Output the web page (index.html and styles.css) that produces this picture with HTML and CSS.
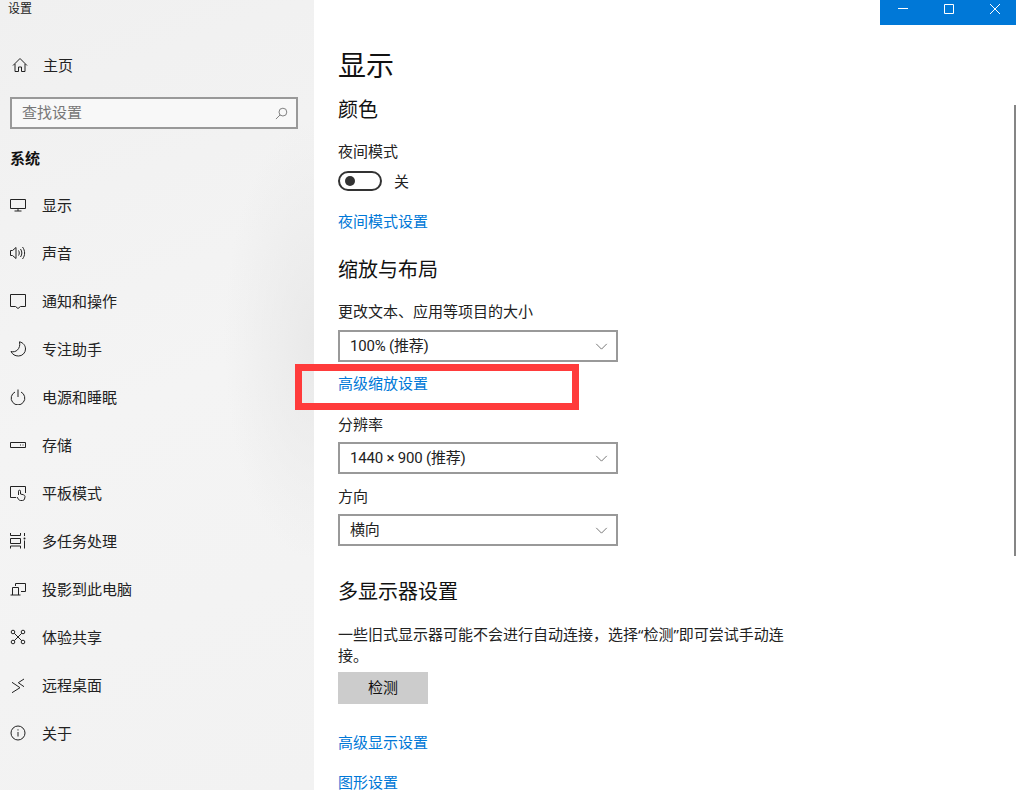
FILE: index.html
```html
<!DOCTYPE html>
<html lang="zh-CN">
<head>
<meta charset="utf-8">
<title>设置</title>
<link rel="stylesheet" href="styles.css">
</head>
<body>
<div class="window">
  <aside class="sidebar">
    <div class="app-title">设置</div>
    <a class="nav-item home">
      <svg class="icon" viewBox="0 0 16 16"><path d="M1 8.500 8 1.500l7 7M3 7v7.500h3.500V10h3v4.500H13V7"/></svg>
      <span>主页</span>
    </a>
    <div class="search">
      <span class="search-text">查找设置</span>
      <svg class="search-icon" viewBox="0 0 14 14"><circle cx="8.500" cy="5.500" r="4.200"/><path d="M5.500 8.500 1 13"/></svg>
    </div>
    <div class="group">系统</div>
    <nav class="nav">
      <a class="nav-item"><svg class="icon" viewBox="0 0 16 16"><path d="M.5 2.500h15v9H.5zM8 11.500v2.500M4.500 14h7"/></svg><span>显示</span></a>
      <a class="nav-item"><svg class="icon" viewBox="0 0 16 16"><path d="M.5 5.500h2L6 2.500v11l-3.500-3h-2zM8.500 5.500c1 1.500 1 3.500 0 5M10.500 4c1.800 2.500 1.800 5.500 0 8M12.500 2c2.800 3.500 2.800 8.500 0 12"/></svg><span>声音</span></a>
      <a class="nav-item"><svg class="icon" viewBox="0 0 16 16"><path d="M.5 1.500h15v12h-5L8 15.500 5.500 13.500h-5z"/></svg><span>通知和操作</span></a>
      <a class="nav-item"><svg class="icon" viewBox="0 0 16 16"><path d="M9.500.8c4 1 6 4 6 7.200a7 7 0 0 1-7 7c-3.500 0-6-1.500-7.500-4.500 4.500 1.500 10-2.500 8.500-9.700z"/></svg><span>专注助手</span></a>
      <a class="nav-item"><svg class="icon" viewBox="0 0 16 16"><path d="M5 3a6.800 6.800 0 1 0 6 0M8 .5V8"/></svg><span>电源和睡眠</span></a>
      <a class="nav-item"><svg class="icon" viewBox="0 0 16 16"><path d="M.5 5.500h15v5H.5zM10 8h1M12.500 8h1"/></svg><span>存储</span></a>
      <a class="nav-item"><svg class="icon" viewBox="0 0 16 16"><path d="M6 12.500H.5V1.500h15V8M8.500 10V6.200a1 1 0 0 1 2 0V9l3 .8c1.200.4 1.500 1 1.500 2l-.5 2.200c-.3 1-1 1.500-2 1.500h-2c-1 0-1.500-.5-2-1.200L7 12"/></svg><span>平板模式</span></a>
      <a class="nav-item"><svg class="icon" viewBox="0 0 16 16"><path d="M.5 0v2.500h10V0M.5 15.500V13h10v2.500M.5 5.500h10v5H.5zM14.500 0v3M14.500 7.500v8"/><circle class="dot" cx="14.500" cy="5.500" r="1"/></svg><span>多任务处理</span></a>
      <a class="nav-item"><svg class="icon" viewBox="0 0 16 16"><path d="M5.500 5V2.500h10v8H11M.5 14h10M2.500 14V6.500h6V14"/></svg><span>投影到此电脑</span></a>
      <a class="nav-item"><svg class="icon" viewBox="0 0 16 16"><circle cx="3" cy="3" r="1.800"/><circle cx="13" cy="3" r="1.800"/><circle cx="3" cy="13" r="1.800"/><circle cx="13" cy="13" r="1.800"/><path d="m4.300 4.300 7.400 7.400M11.700 4.300l-7.400 7.400"/></svg><span>体验共享</span></a>
      <a class="nav-item"><svg class="icon" viewBox="0 0 16 16"><path d="m2 5.300 8 5.400-8 5M14 2 8.300 5.700 14 9.700"/></svg><span>远程桌面</span></a>
      <a class="nav-item"><svg class="icon" viewBox="0 0 16 16"><circle cx="8" cy="8" r="7"/><path d="M8 7v4.500M8 4.300v1.200"/></svg><span>关于</span></a>
    </nav>
  </aside>
  <main class="content">
    <h1 class="title">显示</h1>
    <h2 class="heading first">颜色</h2>
    <div class="label gap-18">夜间模式</div>
    <div class="toggle-row">
      <span class="toggle"><span class="knob"></span></span>
      <span>关</span>
    </div>
    <a class="link gap-21">夜间模式设置</a>
    <h2 class="heading gap-24">缩放与布局</h2>
    <div class="label gap-18">更改文本、应用等项目的大小</div>
    <div class="select gap-8"><span class="select-text">100% (推荐)</span><svg class="chevron" viewBox="0 0 14 8"><path d="m1 1 6 6 6-6"/></svg></div>
    <a class="link gap-12">高级缩放设置</a>
    <div class="label gap-21">分辨率</div>
    <div class="select gap-7"><span class="select-text">1440 × 900 (推荐)</span><svg class="chevron" viewBox="0 0 14 8"><path d="m1 1 6 6 6-6"/></svg></div>
    <div class="label gap-13">方向</div>
    <div class="select gap-7"><span class="select-text">横向</span><svg class="chevron" viewBox="0 0 14 8"><path d="m1 1 6 6 6-6"/></svg></div>
    <h2 class="heading gap-32">多显示器设置</h2>
    <p class="para">一些旧式显示器可能不会进行自动连接，选择“检测”即可尝试手动连接。</p>
    <div class="button">检测</div>
    <a class="link gap-29">高级显示设置</a>
    <a class="link gap-20">图形设置</a>
    <div class="scrollbar"></div>
  </main>
  <div class="caption">
    <span class="cap-btn"><svg viewBox="0 0 10 10"><path d="M0 4.500h10"/></svg></span>
    <span class="cap-btn"><svg viewBox="0 0 10 10"><path d="M.5.500h9v9h-9z"/></svg></span>
    <span class="cap-btn"><svg viewBox="0 0 10 10"><path d="m0 0 10 10M10 0 0 10"/></svg></span>
  </div>
  <div class="highlight"></div>
</div>
</body>
</html>
```
FILE: styles.css
```css
* { box-sizing: border-box; }
html, body { margin: 0; height: 100%; overflow: hidden; background: #fff; }
body {
  font-family: "Noto Sans", "Noto Sans CJK SC", sans-serif;
  font-size: 15px;
  color: #111;
}
.window { position: relative; display: flex; width: 1016px; height: 790px; overflow: hidden; }

.sidebar {
  width: 314px;
  flex: none;
  padding: 0 0 0 10px;
  background:
    radial-gradient(ellipse 90px 220px at 100% 340px, #e9e9e9 0%, rgba(233,233,233,0) 100%),
    linear-gradient(160deg, #f0f0f0 0%, #f4f4f4 50%, #f2f2f2 100%);
}
.app-title { margin-left: -2px; height: 18px; font-size: 12px; line-height: 18px; color: #222; }
.nav-item { display: flex; align-items: center; gap: 16px; height: 48px; line-height: 20px; color: #222; }
.nav-item span { display: block; }
.home { margin-top: 23px; padding-left: 2px; gap: 15px; }
.icon { width: 16px; height: 16px; flex: none; fill: none; stroke: #222; stroke-width: 1; }
.icon .dot { fill: #222; stroke: none; }
.search {
  display: flex;
  align-items: center;
  justify-content: space-between;
  width: 288px;
  height: 32px;
  margin-top: 8px;
  padding: 0 8px 0 10px;
  border: 2px solid #999;
  background: #f8f8f8;
  color: #777;
}
.search-text { display: block; height: 20px; line-height: 18px; }
.search-icon { width: 13px; height: 13px; fill: none; stroke: #777; stroke-width: 1; }
.group { margin-top: 19px; height: 20px; line-height: 20px; font-weight: 700; color: #111; }
.nav { margin-top: 13px; }

.content { position: relative; flex: 1; padding: 45px 0 0 24px; min-width: 0; }
.title { margin: 0; height: 40px; font-size: 28px; line-height: 40px; font-weight: 400; color: #111; }
.heading { margin: 0; height: 28px; font-size: 20px; line-height: 28px; font-weight: 400; color: #111; }
.first { margin-top: 11px; }
.label, .link { display: block; height: 20px; line-height: 18px; }
.label { color: #222; }
.link { color: #0078d7; }
.gap-7 { margin-top: 7px; }
.gap-8 { margin-top: 8px; }
.gap-12 { margin-top: 12px; }
.gap-13 { margin-top: 13px; }
.gap-18 { margin-top: 18px; }
.gap-20 { margin-top: 20px; }
.gap-21 { margin-top: 21px; }
.gap-24 { margin-top: 24px; }
.gap-29 { margin-top: 29px; }
.gap-32 { margin-top: 32px; }
.toggle-row { display: flex; align-items: center; gap: 12px; height: 20px; margin-top: 9px; line-height: 20px; color: #222; }
.toggle { display: flex; align-items: center; width: 44px; height: 20px; padding-left: 5px; border: 2px solid #333; border-radius: 10px; }
.knob { width: 10px; height: 10px; border-radius: 50%; background: #333; }
.select {
  display: flex;
  align-items: center;
  justify-content: space-between;
  width: 280px;
  height: 32px;
  padding: 0 8px 0 10px;
  border: 2px solid #999;
  color: #222;
}
.select-text { display: block; height: 20px; line-height: 20px; letter-spacing: -0.2px; font-family: Roboto, "Noto Sans CJK SC", sans-serif; }
.chevron { width: 13px; height: 7px; fill: none; stroke: #666; stroke-width: 1; }
.para { width: 460px; margin: 18px 0 0; font-size: 15px; line-height: 21px; color: #222; }
.button { width: 90px; height: 32px; margin-top: 6px; background: #ccc; text-align: center; line-height: 30px; color: #111; }
.scrollbar { position: absolute; top: 105px; right: 0; width: 2px; height: 451px; background: #858585; }

.caption { position: absolute; top: 0; right: 0; display: flex; width: 136px; height: 25px; background: #0078d7; }
.cap-btn { display: flex; flex: none; justify-content: center; width: 46px; padding-top: 4px; }
.cap-btn svg { width: 10px; height: 10px; fill: none; stroke: #fff; stroke-width: 1; }
.highlight { position: absolute; top: 364px; left: 295px; width: 284px; height: 46px; border: 7px solid #ff3b3b; }
```
